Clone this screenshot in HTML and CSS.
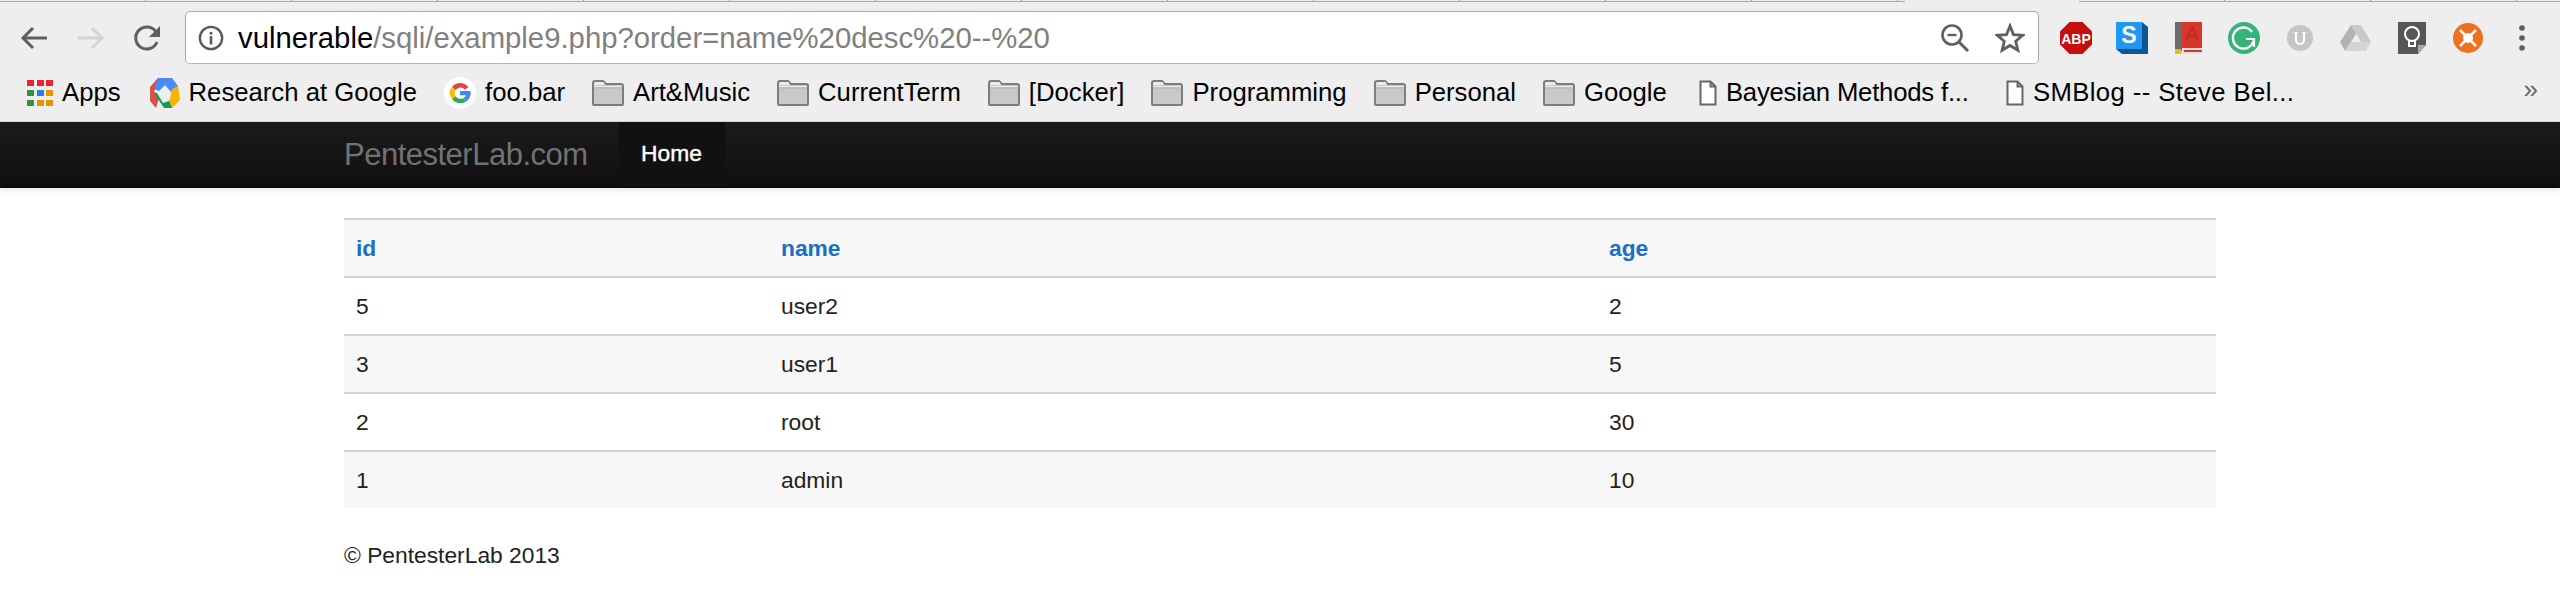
FILE: index.html
```html
<!DOCTYPE html>
<html lang="en">
<head>
    <meta charset="UTF-8">
    <title>PentesterLab.com</title>
    <link rel="stylesheet" href="styles.css">
</head>
<body>
    <svg class="defs" width="0" height="0">
        <symbol id="folder" viewBox="0 0 32 26">
            <path d="M1 24V3q0-2 2-2h8l3 3h15q2 0 2 2v18q0 1-1 1H2q-1 0-1-1z" fill="#c9c9c9" stroke="#7d7d7d" stroke-width="2"/>
            <path d="M2 5h11l-1.500-3H3z M2 6h28v3H2z" fill="#ececec"/>
            <path d="M1 8h30" stroke="#8f8f8f" stroke-width="1"/>
        </symbol>
        <symbol id="page" viewBox="0 0 18 26">
            <path d="M1.500 1.500h10l5 5v18h-15z M11.500 1.500v5h5" fill="#fff" stroke="#666" stroke-width="2"/>
        </symbol>
    </svg>

    <div class="tabstrip">
        <div class="tab-line tab-line-left"></div>
        <div class="tab-line tab-line-right"></div>
    </div>
    <div class="toolbar">
        <div class="nav-buttons">
            <svg class="nav-icon" viewBox="0 0 30 30"><path d="M28 15H5M14 5L4 15l10 10" fill="none" stroke="#5f5f5f" stroke-width="3"/></svg>
            <svg class="nav-icon" viewBox="0 0 30 30"><path d="M2 15h23M16 5l10 10-10 10" fill="none" stroke="#d4d4d4" stroke-width="3"/></svg>
            <svg class="nav-icon" viewBox="0 0 30 30"><path d="M24 19a11 11 0 1 1-1-10" fill="none" stroke="#5f5f5f" stroke-width="3"/><path d="M27 3v11H16z" fill="#5f5f5f"/></svg>
        </div>
        <div class="omnibox">
            <svg class="info-icon" viewBox="0 0 28 28"><circle cx="14" cy="14" r="12" fill="none" stroke="#5a5a5a" stroke-width="2.600"/><rect x="12.600" y="12" width="2.800" height="9" fill="#5a5a5a"/><rect x="12.600" y="7.500" width="2.800" height="2.800" fill="#5a5a5a"/></svg>
            <span class="url"><span class="host">vulnerable</span>/sqli/example9.php?order=name%20desc%20--%20</span>
            <svg class="zoom-icon" viewBox="0 0 30 30"><circle cx="12" cy="12" r="9.500" fill="none" stroke="#5f5f5f" stroke-width="2.600"/><path d="M7.500 12h9" stroke="#5f5f5f" stroke-width="2.400"/><path d="M19 19l9 9" stroke="#5f5f5f" stroke-width="3"/></svg>
            <svg class="star-icon" viewBox="0 0 30 30"><path d="M15 3l3.500 8.600 9.300.7-7.100 6 2.200 9L15 22.500 7.100 27.300l2.200-9-7.100-6 9.300-.7z" fill="none" stroke="#5f5f5f" stroke-width="2.800"/></svg>
        </div>
        <div class="extensions">
            <svg class="ext" viewBox="0 0 32 32"><path d="M9.500 0h13L32 9.500v13L22.500 32h-13L0 22.500v-13z" fill="#c70d0d"/><text x="16" y="21.500" class="abp-text">ABP</text></svg>
            <svg class="ext" viewBox="0 0 32 32"><path d="M0 0h26l6 5v27H6l-6-5z" fill="#0f5592"/><rect width="26" height="27" fill="#1f97f3"/><text x="13" y="21" class="s-text">S</text></svg>
            <svg class="ext" viewBox="0 0 32 32"><rect x="3" y="0" width="27" height="32" fill="#e0e0e0"/><rect x="3" width="7" height="29" fill="#6b6b6b"/><rect x="10" width="20" height="26" fill="#d9352b"/><text x="20" y="19" class="book-text">A</text><rect x="3" y="27" width="6" height="5" fill="#f0b429"/><rect x="12" y="28" width="18" height="2" fill="#d9352b"/></svg>
            <svg class="ext" viewBox="0 0 32 32"><circle cx="16" cy="16" r="16" fill="#36b37a"/><path d="M24 10a10.500 10.500 0 1 0 1.500 9" fill="none" stroke="#fff" stroke-width="2.400"/><path d="M18 17h8v8" fill="none" stroke="#fff" stroke-width="2.200"/></svg>
            <svg class="ext" viewBox="0 0 32 32"><circle cx="16" cy="16" r="13" fill="#c6c6c6"/><path d="M10 10h4v1h-1v7a3 3 0 0 0 6 0v-7h-1v-1h4v1h-1v7a5 5 0 0 1-10 0v-7h-1z" fill="#fff"/></svg>
            <svg class="ext" viewBox="0 0 32 32"><path d="M11 3h10l10 17h-10z" fill="#c9c9c9"/><path d="M11 3L0 20l5 9 11-17z" fill="#b2b2b2"/><path d="M5 29h21l5-9H11z" fill="#d4d4d4"/></svg>
            <svg class="ext" viewBox="0 0 32 32"><path d="M2 0h28v23l-8 9H2z" fill="#575757"/><path d="M22 32v-9h8z" fill="#a8a8a8"/><circle cx="16" cy="12" r="7" fill="none" stroke="#fff" stroke-width="2"/><path d="M13 19v5h6v-5" fill="none" stroke="#fff" stroke-width="2"/></svg>
            <svg class="ext" viewBox="0 0 32 32"><circle cx="16" cy="16" r="15" fill="#f07020"/><circle cx="16" cy="16" r="5" fill="#fff"/><path d="M8 8l16 16M24 8L8 24" stroke="#fff" stroke-width="2.500"/></svg>
        </div>
        <svg class="menu-icon" viewBox="0 0 8 30"><circle cx="4" cy="5" r="2.800"/><circle cx="4" cy="15" r="2.800"/><circle cx="4" cy="25" r="2.800"/></svg>
    </div>

    <div class="bookmarks">
        <span class="bookmark">
            <svg class="apps-icon" viewBox="0 0 26 26"><g fill="#ee2230"><rect width="7" height="6"/><rect x="10" width="7" height="6"/><rect x="19" width="7" height="6"/></g><rect y="10" width="7" height="6" fill="#32923f"/><rect x="10" y="10" width="7" height="6" fill="#2a7de1"/><rect x="19" y="10" width="7" height="6" fill="#ea9200"/><rect y="20" width="7" height="6" fill="#32923f"/><rect x="10" y="20" width="7" height="6" fill="#ea9200"/><rect x="19" y="20" width="7" height="6" fill="#ea9200"/></svg>
            Apps
        </span>
        <span class="bookmark">
            <svg class="bm-icon" viewBox="0 0 32 32"><path d="M2 10L10 1h6L6 14l5 7-3 10-6-7z" fill="#dd5044"/><path d="M10 1h14l6 8-7 6-6-7-6 6-5-2z" fill="#4a8af4"/><path d="M24 12l6-3 2 14-8 8H16l6-9z" fill="#f4b400"/><path d="M6 16l10 15h8l-3-7-6 2-6-10z" fill="#0f9d58"/></svg>
            Research at Google
        </span>
        <span class="bookmark">
            <svg class="bm-icon" viewBox="0 0 32 32"><circle cx="16" cy="16" r="16" fill="#fff"/><path d="M24.500 10.200A10.500 10.500 0 0 0 8 9.800l3.600 3.200a6 6 0 0 1 9.200-.5z" fill="#ea4335"/><path d="M8 9.800a10.500 10.500 0 0 0 0 12.400l3.600-3a6 6 0 0 1 0-6.200z" fill="#fbbc05"/><path d="M8 22.200a10.500 10.500 0 0 0 14.500 2l-3.200-3a6 6 0 0 1-7.700-2z" fill="#34a853"/><path d="M22.500 24.200A10.500 10.500 0 0 0 26.500 14H16v4.300h6a5 5 0 0 1-2.700 2.900z" fill="#4285f4"/></svg>
            foo.bar
        </span>
        <span class="bookmark"><svg class="folder"><use href="#folder"/></svg>Art&amp;Music</span>
        <span class="bookmark"><svg class="folder"><use href="#folder"/></svg>CurrentTerm</span>
        <span class="bookmark"><svg class="folder"><use href="#folder"/></svg>[Docker]</span>
        <span class="bookmark"><svg class="folder"><use href="#folder"/></svg>Programming</span>
        <span class="bookmark"><svg class="folder"><use href="#folder"/></svg>Personal</span>
        <span class="bookmark"><svg class="folder"><use href="#folder"/></svg>Google</span>
        <span class="bookmark bookmark-page bookmark-long"><svg class="page-icon"><use href="#page"/></svg>Bayesian Methods f...</span>
        <span class="bookmark bookmark-page"><svg class="page-icon"><use href="#page"/></svg>SMBlog -- Steve Bel...</span>
        <span class="more">»</span>
    </div>

    <div class="navbar">
        <a class="brand">PentesterLab.com</a>
        <a class="nav-item">Home</a>
    </div>

    <div class="container">
        <table class="results">
            <thead>
                <tr><th><a>id</a></th><th><a>name</a></th><th><a>age</a></th></tr>
            </thead>
            <tbody>
                <tr><td>5</td><td>user2</td><td>2</td></tr>
                <tr><td>3</td><td>user1</td><td>5</td></tr>
                <tr><td>2</td><td>root</td><td>30</td></tr>
                <tr><td>1</td><td>admin</td><td>10</td></tr>
            </tbody>
        </table>
        <footer class="footer">© PentesterLab 2013</footer>
    </div>
</body>
</html>
```

FILE: styles.css
```css
* {
    margin: 0;
    padding: 0;
    box-sizing: border-box;
}

body {
    font-family: 'Liberation Sans', Arial, sans-serif;
    background: #fff;
    color: #222;
    font-size: 22.800px;
}

.defs {
    display: block;
    height: 0;
}

.tabstrip {
    display: flex;
    justify-content: space-between;
    height: 3px;
    background: #eee;
}

.tab-line {
    height: 2px;
    border-bottom: 1px solid #a8a8a8;
    background: repeating-linear-gradient(90deg, transparent 0, transparent 145px, #999 145px, #999 146px);
}

.tab-line-left {
    width: 1905px;
}

.tab-line-right {
    width: 481px;
}

.toolbar {
    display: flex;
    align-items: center;
    height: 61px;
    padding-top: 8px;
    background: #eee;
}

.nav-buttons {
    display: flex;
    flex: none;
    align-items: center;
    gap: 27px;
    width: 185px;
    padding-left: 19px;
}

.nav-icon {
    flex: none;
    width: 30px;
    height: 30px;
}

.omnibox {
    display: flex;
    flex: none;
    align-items: center;
    width: 1854px;
    height: 53px;
    background: #fff;
    border: 1px solid #a9a9a9;
    border-bottom-color: #b5b5b5;
    border-radius: 5px;
    padding: 0 13px 0 12px;
}

.info-icon {
    flex: none;
    width: 26px;
    height: 26px;
    margin-right: 14px;
}

.url {
    flex: 1;
    font-size: 29.300px;
    color: #808080;
    white-space: nowrap;
}

.host {
    color: #000;
}

.zoom-icon {
    flex: none;
    width: 30px;
    height: 30px;
    margin-right: 25px;
}

.star-icon {
    flex: none;
    width: 30px;
    height: 30px;
}

.extensions {
    display: flex;
    flex: none;
    align-items: center;
    gap: 24px;
    margin-left: 21px;
}

.ext {
    width: 32px;
    height: 32px;
    display: block;
}

.abp-text {
    font-size: 14px;
    font-weight: bold;
    fill: #fff;
    text-anchor: middle;
}

.s-text {
    font-size: 23px;
    font-weight: bold;
    fill: #fff;
    text-anchor: middle;
}

.book-text {
    font-size: 20px;
    fill: #b92a22;
    text-anchor: middle;
}

.menu-icon {
    flex: none;
    width: 8px;
    height: 30px;
    margin-left: 34px;
    fill: #5f5f5f;
}

.bookmarks {
    display: flex;
    align-items: center;
    height: 58px;
    background: #eee;
    border-bottom: 1px solid #d4d4d4;
    padding-left: 27px;
    gap: 27px;
    font-size: 25.700px;
    color: #000;
    position: relative;
}

.bookmark {
    display: flex;
    align-items: center;
    gap: 9px;
    white-space: nowrap;
}

.bookmark-page {
    margin-left: 5px;
    letter-spacing: 0.4px;
}

.bookmark-long {
    width: 275px;
    letter-spacing: -0.2px;
}

.apps-icon {
    flex: none;
    width: 26px;
    height: 26px;
}

.bm-icon {
    flex: none;
    width: 32px;
    height: 32px;
}

.folder {
    flex: none;
    width: 32px;
    height: 26px;
}

.page-icon {
    flex: none;
    width: 18px;
    height: 26px;
}

.more {
    position: absolute;
    right: 22px;
    top: 10px;
    color: #666;
    font-size: 26px;
}

.navbar {
    display: flex;
    height: 66px;
    padding-left: 344px;
    background: linear-gradient(#1b1b1b, #101010);
    border-bottom: 2px solid #0a0a0a;
    box-shadow: 0 2px 6px rgba(0, 0, 0, 0.1);
}

.brand {
    font-size: 31px;
    font-weight: normal;
    letter-spacing: -0.5px;
    color: #727272;
    line-height: 66px;
    width: 275px;
}

.nav-item {
    display: block;
    width: 106px;
    padding-left: 22px;
    background: #111;
    color: #fff;
    font-size: 22.800px;
    line-height: 63px;
    -webkit-text-stroke: 0.4px #fff;
}

.container {
    width: 1872px;
    margin-left: 344px;
    padding-top: 30px;
}

.results {
    width: 100%;
    border-collapse: separate;
    border-spacing: 0;
    table-layout: fixed;
    font-size: 22.800px;
    border-top: 2px solid #d4d4d4;
}

.results th,
.results td {
    height: 58px;
    padding: 0 12px;
    text-align: left;
    border-bottom: 2px solid #d4d4d4;
}

.results th:nth-child(1),
.results td:nth-child(1) {
    width: 425px;
}

.results th:nth-child(2),
.results td:nth-child(2) {
    width: 828px;
}

.results th a {
    color: #1a6fc7;
}

.results thead tr,
.results tbody tr:nth-child(even) {
    background: #f7f7f7;
}

.results tbody tr:last-child td {
    height: 56px;
    border-bottom: none;
}

.footer {
    margin-top: 34px;
}
```
